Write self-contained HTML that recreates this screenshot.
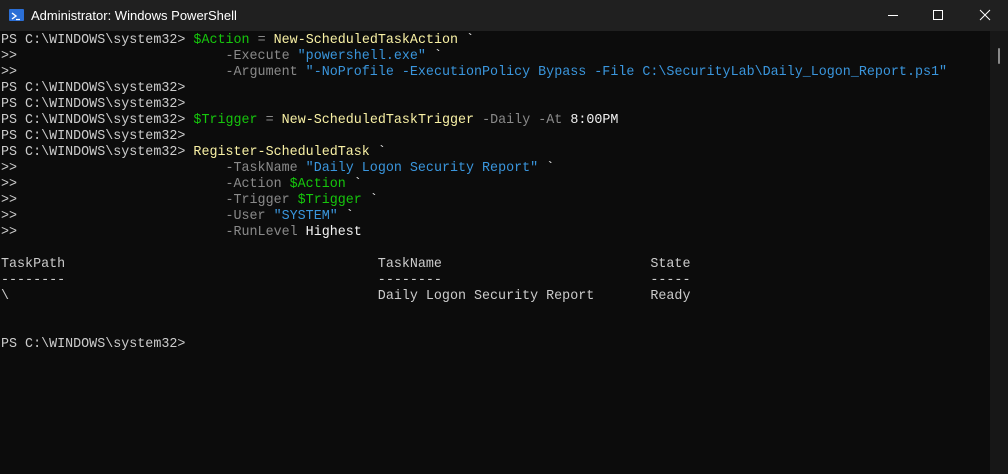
<!DOCTYPE html>
<html><head><meta charset="utf-8"><style>
html,body{margin:0;padding:0;width:1008px;height:474px;overflow:hidden;background:#0c0c0c;}
#title{position:absolute;left:0;top:0;width:1008px;height:31px;background:#202020;}
#title .t{position:absolute;left:31px;top:8px;font:13px "Liberation Sans",sans-serif;color:#fff;}
#ico{position:absolute;left:9px;top:9px;width:15px;height:12px;background:#2b6fd6;border-radius:1px;}
#term{position:absolute;left:0;top:31px;width:990px;height:443px;background:#0c0c0c;}
#sb{position:absolute;left:990px;top:31px;width:18px;height:443px;background:#171717;}
#thumb{position:absolute;left:998px;top:48px;width:2px;height:16px;background:#8a8a8a;border-radius:1px;}
pre{position:absolute;left:1px;top:33px;margin:0;font:13.36px/16px "Liberation Mono",monospace;color:#cccccc;}
.g{color:#16c60c}.y{color:#f9f1a5}.d{color:#8a8a8a}.b{color:#3a96dd}.w{color:#f2f2f2}
</style></head><body>
<div id="title"><div id="ico"><svg width="15" height="12" viewBox="0 0 15 12"><path d="M3 3 L7 6 L3 9" stroke="#fff" stroke-width="1.4" fill="none"/><path d="M7 9.5 H11" stroke="#fff" stroke-width="1.2"/></svg></div><div class="t">Administrator: Windows PowerShell</div>
<svg style="position:absolute;left:880px;top:8px" width="120" height="16"><path d="M8 7.5 H18" stroke="#fff" stroke-width="1"/><rect x="53.5" y="2.5" width="9" height="9" fill="none" stroke="#fff" stroke-width="1"/><path d="M100 2 L110 12 M110 2 L100 12" stroke="#fff" stroke-width="1"/></svg></div>
<div id="term"></div><div id="sb"></div><div id="thumb"></div>
<pre>PS C:\WINDOWS\system32&gt; <span class="g">$Action</span> <span class="d">=</span> <span class="y">New-ScheduledTaskAction</span> <span class="w">`</span>
&gt;&gt;                          <span class="d">-Execute</span> <span class="b">"powershell.exe"</span> <span class="w">`</span>
&gt;&gt;                          <span class="d">-Argument</span> <span class="b">"-NoProfile -ExecutionPolicy Bypass -File C:\SecurityLab\Daily_Logon_Report.ps1"</span>
PS C:\WINDOWS\system32&gt;
PS C:\WINDOWS\system32&gt;
PS C:\WINDOWS\system32&gt; <span class="g">$Trigger</span> <span class="d">=</span> <span class="y">New-ScheduledTaskTrigger</span> <span class="d">-Daily</span> <span class="d">-At</span> <span class="w">8:00PM</span>
PS C:\WINDOWS\system32&gt;
PS C:\WINDOWS\system32&gt; <span class="y">Register-ScheduledTask</span> <span class="w">`</span>
&gt;&gt;                          <span class="d">-TaskName</span> <span class="b">"Daily Logon Security Report"</span> <span class="w">`</span>
&gt;&gt;                          <span class="d">-Action</span> <span class="g">$Action</span> <span class="w">`</span>
&gt;&gt;                          <span class="d">-Trigger</span> <span class="g">$Trigger</span> <span class="w">`</span>
&gt;&gt;                          <span class="d">-User</span> <span class="b">"SYSTEM"</span> <span class="w">`</span>
&gt;&gt;                          <span class="d">-RunLevel</span> <span class="w">Highest</span>

TaskPath                                       TaskName                          State
--------                                       --------                          -----
\                                              Daily Logon Security Report       Ready


PS C:\WINDOWS\system32&gt;</pre>
</body></html>
